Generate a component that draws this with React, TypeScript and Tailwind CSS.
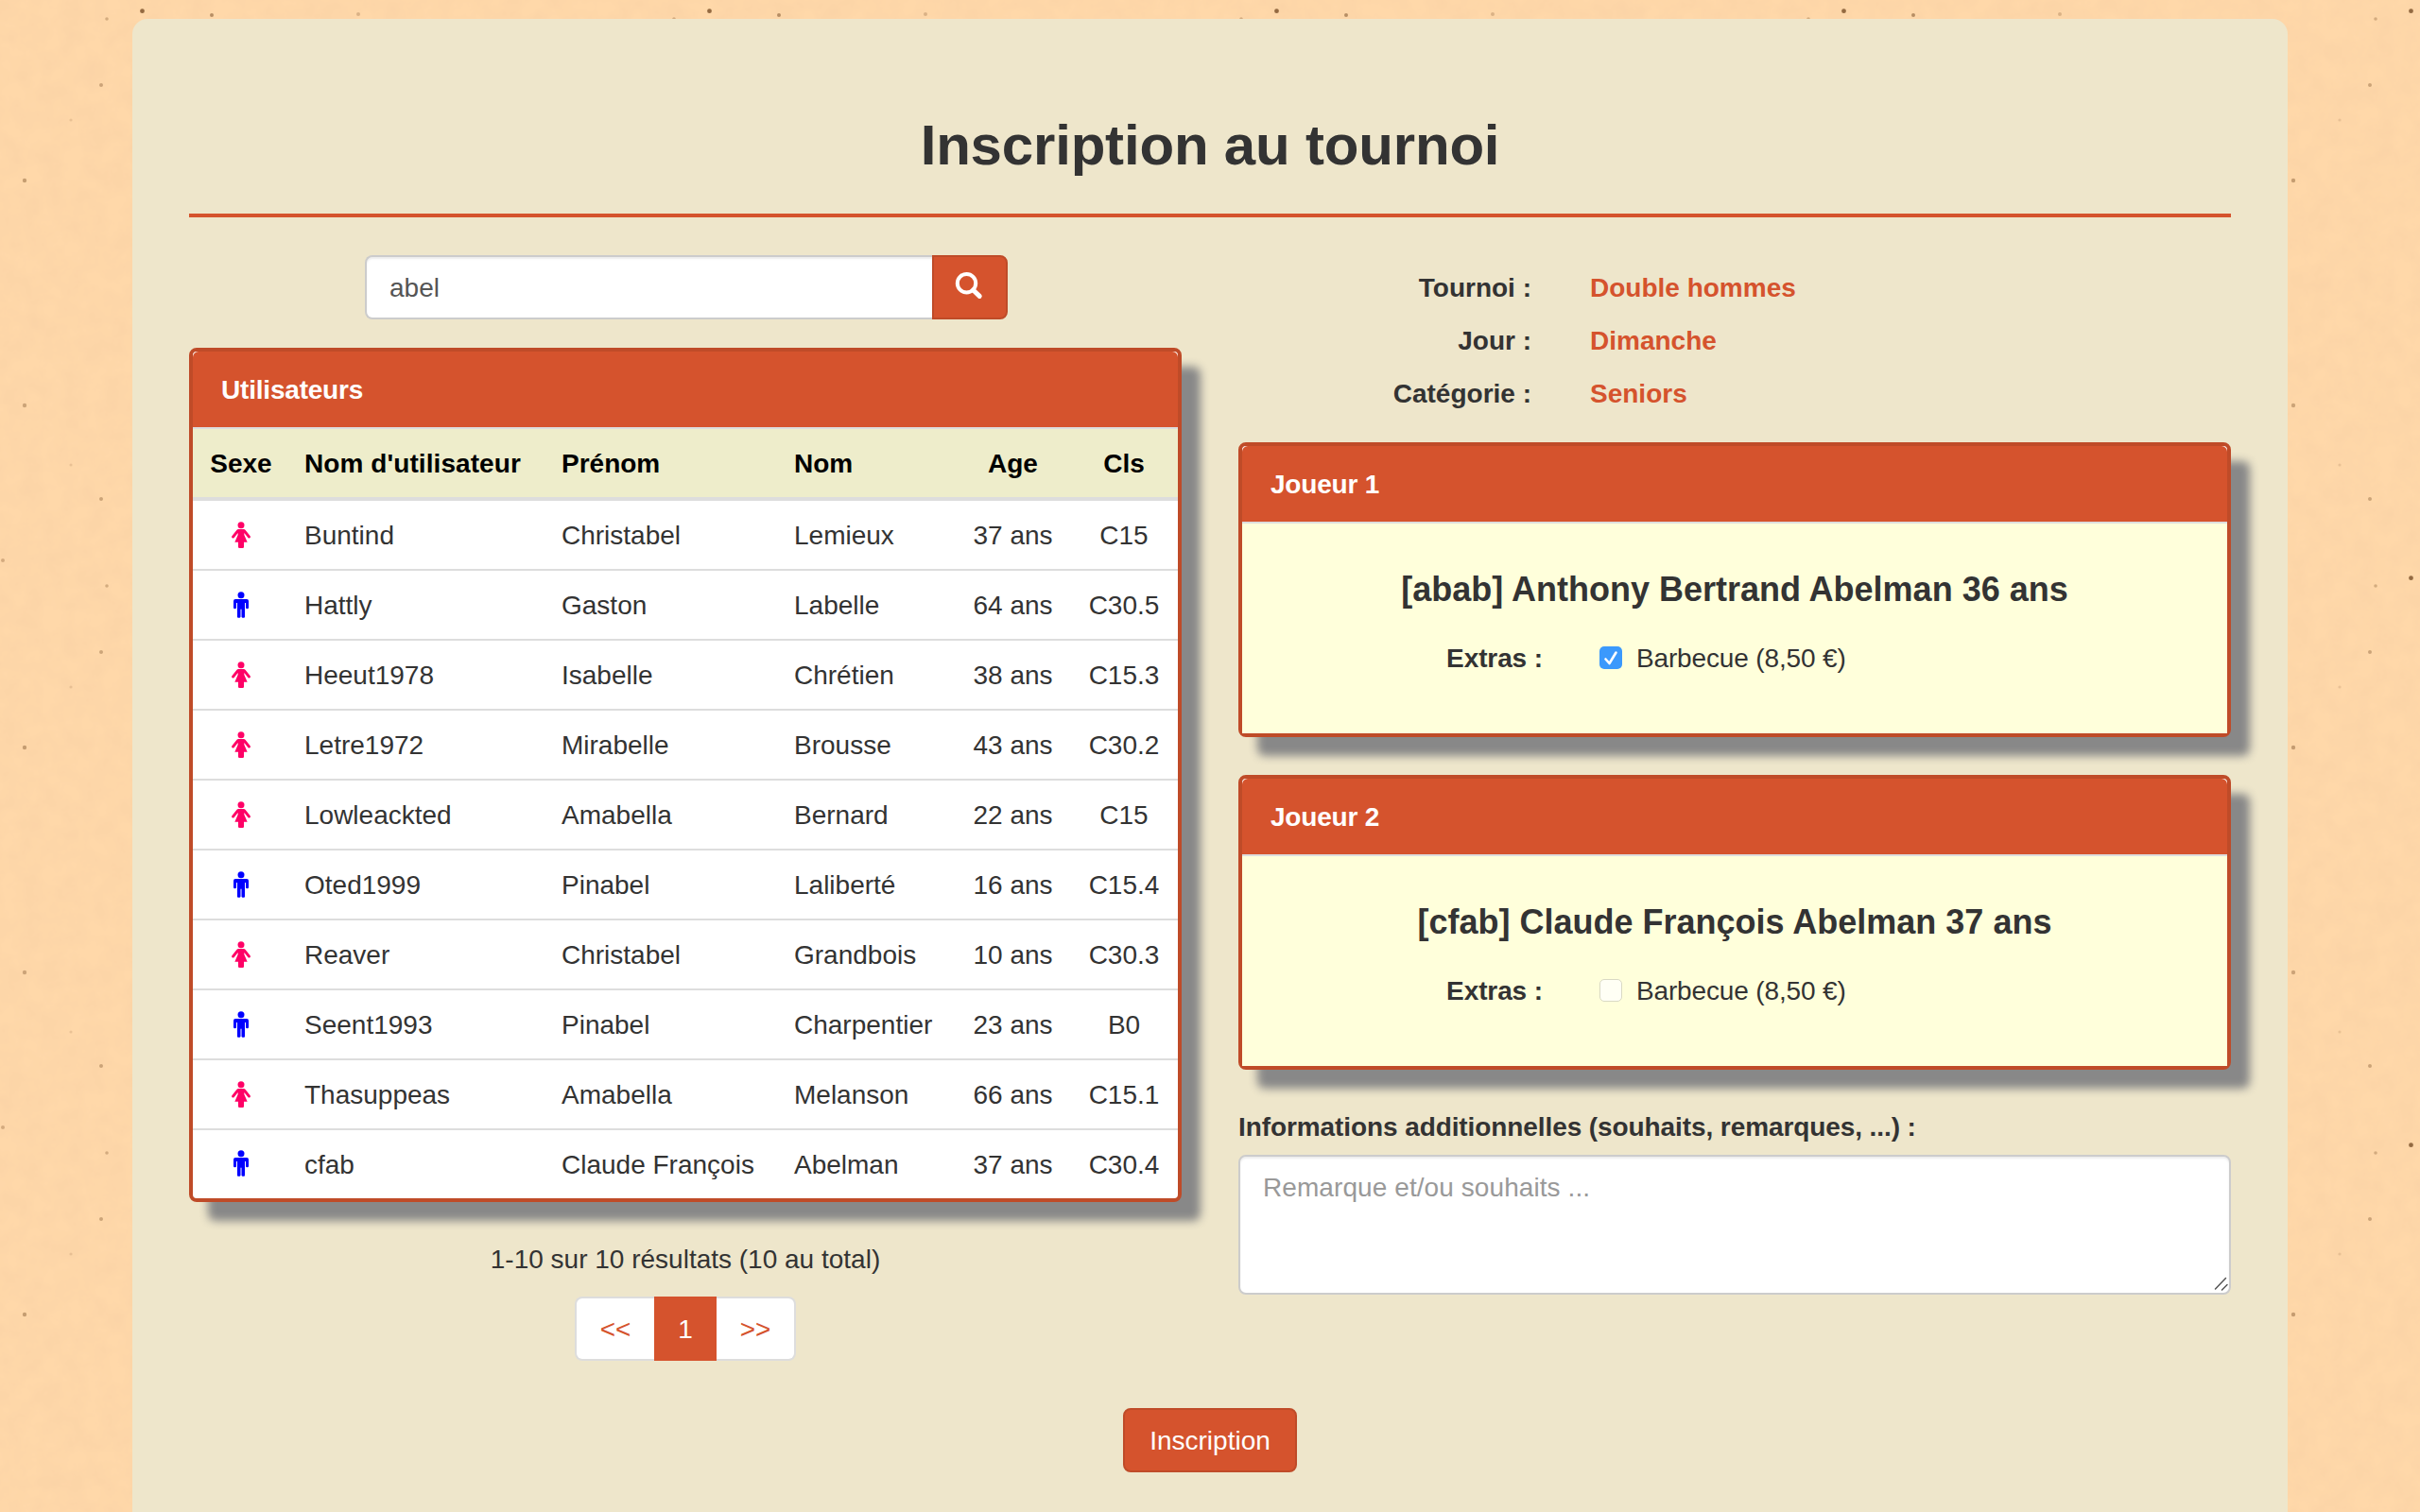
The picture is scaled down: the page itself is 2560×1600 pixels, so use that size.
import React from "react";

type Sex = "f" | "m";

const users: [Sex, string, string, string, string, string][] = [
  ["f", "Buntind", "Christabel", "Lemieux", "37 ans", "C15"],
  ["m", "Hattly", "Gaston", "Labelle", "64 ans", "C30.5"],
  ["f", "Heeut1978", "Isabelle", "Chrétien", "38 ans", "C15.3"],
  ["f", "Letre1972", "Mirabelle", "Brousse", "43 ans", "C30.2"],
  ["f", "Lowleackted", "Amabella", "Bernard", "22 ans", "C15"],
  ["m", "Oted1999", "Pinabel", "Laliberté", "16 ans", "C15.4"],
  ["f", "Reaver", "Christabel", "Grandbois", "10 ans", "C30.3"],
  ["m", "Seent1993", "Pinabel", "Charpentier", "23 ans", "B0"],
  ["f", "Thasuppeas", "Amabella", "Melanson", "66 ans", "C15.1"],
  ["m", "cfab", "Claude François", "Abelman", "37 ans", "C30.4"],
];

// Specks of one 600px paper tile: x, y, radius, opacity
const specks: [number, number, number, number][] = [
  [150.5, 11.7, 2.4, 0.75], [224, 16, 2, 0.5], [379, 15, 2, 0.25], [113, 20, 1.8, 0.3],
  [107, 90, 2, 0.35], [26, 191, 2.2, 0.4], [75, 127, 1.6, 0.15], [26, 429, 2.2, 0.35],
  [75, 492, 1.6, 0.15], [107, 528, 2, 0.35], [3, 593, 2, 0.3],
];

function Paper() {
  return (
    <svg className="absolute inset-0 h-full w-full" aria-hidden="true">
      <filter id="grain" x="0" y="0" width="100%" height="100%">
        <feTurbulence type="fractalNoise" baseFrequency="0.045" numOctaves="4" seed="4" />
        <feColorMatrix values="0 0 0 0 0.9  0 0 0 0 0.6  0 0 0 0 0.36  0.55 0 0 0 -0.15" />
      </filter>
      <pattern id="specks" width="600" height="600" patternUnits="userSpaceOnUse">
        {specks.map(([x, y, r, o], i) => (
          <circle key={i} cx={x} cy={y} r={r} fill="#70451f" opacity={o} />
        ))}
      </pattern>
      <rect width="100%" height="100%" filter="url(#grain)" />
      <rect width="100%" height="100%" fill="url(#specks)" />
    </svg>
  );
}

function Person({ sex }: { sex: Sex }) {
  return sex === "f" ? (
    <svg className="mx-auto block h-7 w-5" viewBox="45 36 60 84" fill="#ff0066">
      <circle cx="75" cy="47.5" r="10.5" />
      <path d="M67 60h16q4 0 6 3l15 19q2 4-1 6t-6-1L85 72v6l10 23H84v15q0 4-4 4H70q-4 0-4-4v-15H55l10-23v-6L53 87q-3 3-6 1t-1-6l15-19q2-3 6-3z" />
    </svg>
  ) : (
    <svg className="mx-auto block h-7 w-5" viewBox="45 258 60 84" fill="#0000ff">
      <circle cx="75" cy="269.500" r="10.5" />
      <path d="M57 282h36q6 0 6 6v21q0 4-4.500 4t-4.500-4v-15h-3v44q0 3-3 3h-4q-3 0-3-3v-24h-4v24q0 3-3 3h-4q-3 0-3-3v-44h-3v15q0 4-4.500 4t-4.500-4v-21q0-6 6-6z" />
      <path d="M73 314h4v25h-4z" opacity=".4" />
    </svg>
  );
}

function Panel({ title, children }: { title: string; children: React.ReactNode }) {
  return (
    <section className="rounded-lg border-4 border-[#bf4b28] bg-white shadow-[20px_20px_10px_#888]">
      <h2 className="h-[82px] rounded-t-md border-b-2 border-[#ddd] bg-[#d5532d] px-[30px] font-bold leading-[82px] tracking-[-0.2px] text-white">
        {title}
      </h2>
      {children}
    </section>
  );
}

function Player({ title, name, checked }: { title: string; name: string; checked: boolean }) {
  return (
    <Panel title={title}>
      <div className="h-[222px] bg-[#ffffdb] pt-[50px]">
        <h3 className="text-center text-[36px] font-bold leading-10">{name}</h3>
        <div className="mt-8 flex h-10 items-center">
          <span className="w-[318px] pt-0.5 text-right font-bold tracking-[-0.1px]">Extras :</span>
          <span
            className={
              checked
                ? "ml-[60px] h-6 w-6 shrink-0 rounded-[5px] bg-[#3b99fc]"
                : "ml-[60px] h-6 w-6 shrink-0 rounded-[5px] border border-[#d9d9c4] bg-[#fffff5]"
            }
          >
            {checked && (
              <svg className="block h-6 w-6" viewBox="0 0 24 24" fill="none" stroke="#fff" strokeWidth="2.600" strokeLinecap="round" strokeLinejoin="round">
                <path d="M6.500 13.500 10.500 18 17.500 6.500" />
              </svg>
            )}
          </span>
          <span className="ml-[15px] pt-0.5 tracking-[-0.15px]">Barbecue (8,50 €)</span>
        </div>
      </div>
    </Panel>
  );
}

const infos = [
  ["Tournoi :", "Double hommes"],
  ["Jour :", "Dimanche"],
  ["Catégorie :", "Seniors"],
];

export default function App() {
  return (
    <div className="relative h-[1600px] w-[2560px] overflow-hidden bg-[#ffd8a9] pt-5 font-['Liberation_Sans',Arial,sans-serif] text-[28px] leading-10 text-[#333]">
      <Paper />
      <main className="relative mx-auto h-[1640px] w-[2280px] rounded-2xl bg-[#eee6cb] px-[60px] pt-[100px]">
        <h1 className="h-[106px] text-center text-[60px] font-bold leading-[68px] tracking-[-0.18px]">Inscription au tournoi</h1>
        <hr className="h-1 border-0 bg-[#d5532d]" />
        <div className="mt-10 grid grid-cols-2 gap-[60px]">
          <div>
            <div className="ml-[186px] flex h-[68px] w-[680px]">
              <input
                className="w-[600px] rounded-l-lg border-2 border-r-0 border-[#ccc] bg-white px-6 pt-0.5 text-[#555] shadow-[inset_0_2px_2px_rgba(0,0,0,0.075)] outline-none"
                defaultValue="abel"
              />
              <button className="flex w-20 justify-center rounded-r-lg border-2 border-[#bf4b28] bg-[#d5532d] pt-[14px]">
                <svg className="h-8 w-8" viewBox="0 0 32 32" fill="none" stroke="#fff">
                  <circle cx="12.500" cy="13.700" r="9.700" strokeWidth="4" />
                  <path d="M19.500 21 26.200 27.400" strokeWidth="5" strokeLinecap="round" />
                </svg>
              </button>
            </div>
            <div className="mt-[30px]">
              <Panel title="Utilisateurs">
                <table className="w-full table-fixed border-collapse">
                  <colgroup>
                    <col className="w-[102px]" />
                    <col className="w-[272px]" />
                    <col className="w-[246px]" />
                    <col className="w-[187px]" />
                    <col className="w-[121px]" />
                    <col className="w-[114px]" />
                  </colgroup>
                  <thead>
                    <tr className="h-[76px] bg-[#eeedcb] text-left text-black shadow-[inset_0_-4px_0_#ddd]">
                      <th className="pb-0.5 text-center">Sexe</th>
                      <th className="whitespace-nowrap px-4 pb-0.5 tracking-[0.08px]">Nom d'utilisateur</th>
                      <th className="px-4 pb-0.5">Prénom</th>
                      <th className="px-4 pb-0.5">Nom</th>
                      <th className="pb-0.5 text-center">Age</th>
                      <th className="pb-0.5 text-center">Cls</th>
                    </tr>
                  </thead>
                  <tbody>
                    {users.map(([sex, login, first, last, age, rank]) => (
                      <tr key={login} className="h-[74px] shadow-[inset_0_-2px_0_#ddd] last:h-[72px] last:shadow-none last:[&>td+td]:pt-0.5">
                        <td className="pb-0.5"><Person sex={sex} /></td>
                        <td className="px-4">{login}</td>
                        <td className="whitespace-nowrap px-4">{first}</td>
                        <td className="px-4">{last}</td>
                        <td className="text-center">{age}</td>
                        <td className="text-center">{rank}</td>
                      </tr>
                    ))}
                  </tbody>
                </table>
              </Panel>
            </div>
            <p className="mt-[41px] text-center">1-10 sur 10 résultats (10 au total)</p>
            <nav className="mt-[19px] flex h-[68px] justify-center text-[#d5532d]">
              <a className="flex w-[84px] items-center justify-center rounded-l-lg border-2 border-r-0 border-[#ddd] bg-white pt-0.5">&lt;&lt;</a>
              <a className="flex w-[66px] items-center justify-center bg-[#d5532d] pt-0.5 text-white">1</a>
              <a className="flex w-[84px] items-center justify-center rounded-r-lg border-2 border-l-0 border-[#ddd] bg-white pt-0.5">&gt;&gt;</a>
            </nav>
          </div>
          <div>
            <dl className="mt-[15px] h-[183px] font-bold">
              {infos.map(([k, v]) => (
                <div key={k} className="mb-4 flex">
                  <dt className="w-[310px] text-right">{k}</dt>
                  <dd className="ml-[62px] text-[#d5532d]">{v}</dd>
                </div>
              ))}
            </dl>
            <div className="flex flex-col gap-10">
              <Player title="Joueur 1" name="[abab] Anthony Bertrand Abelman 36 ans" checked />
              <Player title="Joueur 2" name="[cfab] Claude François Abelman 37 ans" checked={false} />
            </div>
            <label className="mt-[41px] block font-bold tracking-[-0.09px]">Informations additionnelles (souhaits, remarques, ...) :</label>
            <div className="relative mt-[9px] h-[148px]">
              <textarea
                className="block h-full w-full resize-none rounded-lg border-2 border-[#ccc] bg-white px-6 py-[13px] tracking-[0.08px] shadow-[inset_0_2px_2px_rgba(0,0,0,0.075)] outline-none placeholder:text-[#999]"
                placeholder="Remarque et/ou souhaits ..."
              />
              <svg className="absolute bottom-[3px] right-[2px] h-4 w-4" viewBox="0 0 16 16" stroke="#555" strokeWidth="1.500" strokeLinecap="round">
                <path d="M1.500 13 12.500 1.500M8.500 14 14 8.500" />
              </svg>
            </div>
          </div>
        </div>
        <div className="mt-[50px] flex justify-center">
          <button className="h-[68px] w-[184px] rounded-lg border-2 border-[#bf4b28] bg-[#d5532d] pt-0.5 text-white">Inscription</button>
        </div>
      </main>
    </div>
  );
}
